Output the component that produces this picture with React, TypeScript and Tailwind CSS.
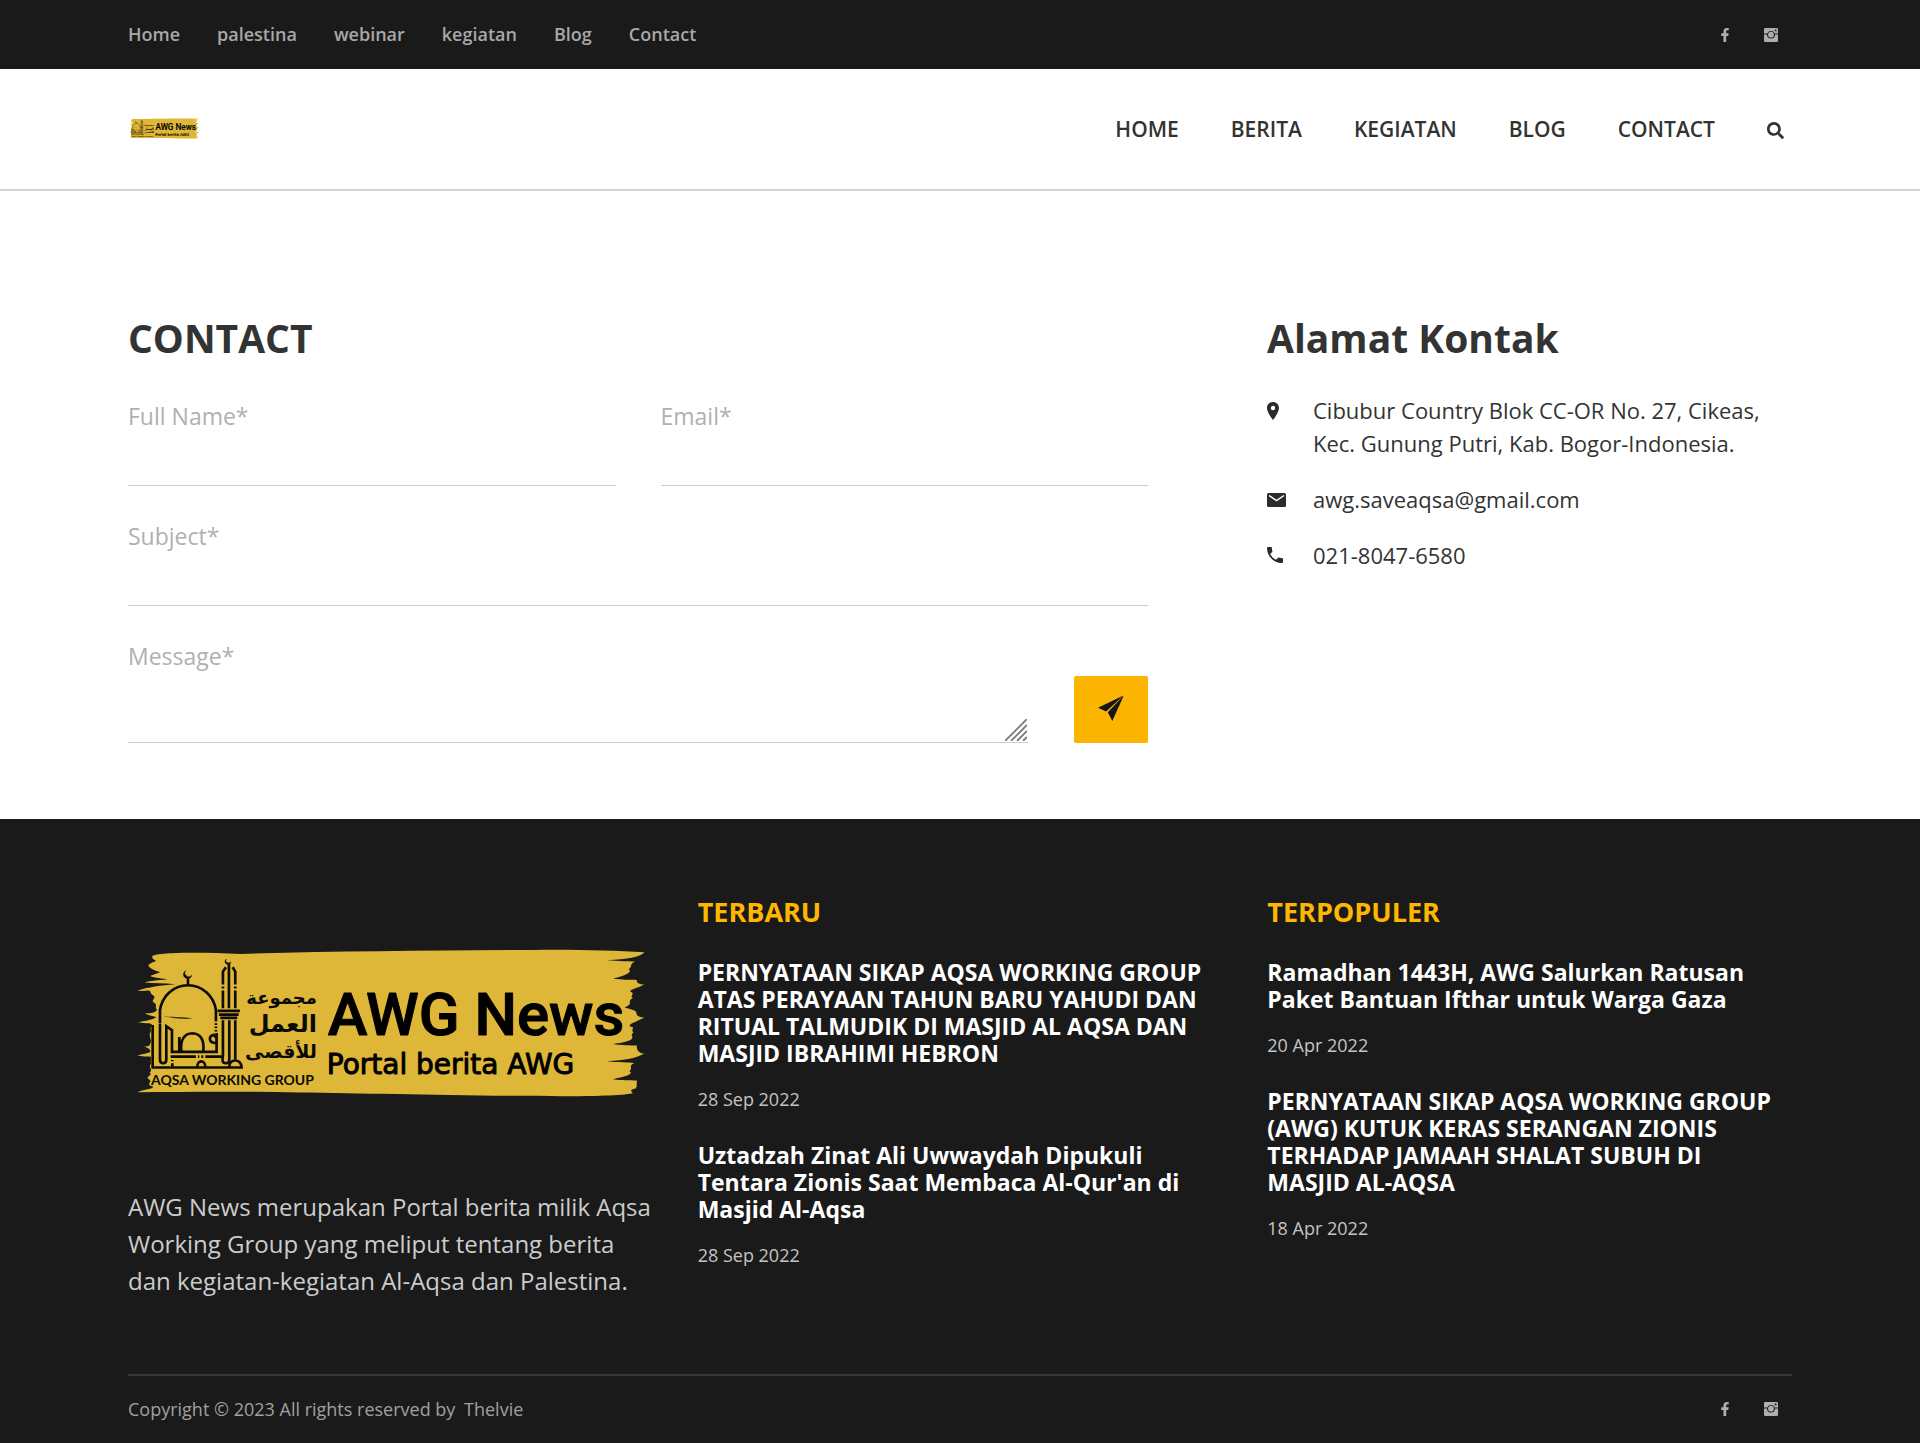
import React from "react";
import { FaFacebookF, FaSearch } from "react-icons/fa";

const topLinks = ["Home", "palestina", "webinar", "kegiatan", "Blog", "Contact"];
const mainLinks = ["HOME", "BERITA", "KEGIATAN", "BLOG", "CONTACT"];

const latest = [
  {
    title:
      "PERNYATAAN SIKAP AQSA WORKING GROUP ATAS PERAYAAN TAHUN BARU YAHUDI DAN RITUAL TALMUDIK DI MASJID AL AQSA DAN MASJID IBRAHIMI HEBRON",
    date: "28 Sep 2022",
  },
  {
    title: "Uztadzah Zinat Ali Uwwaydah Dipukuli Tentara Zionis Saat Membaca Al-Qur'an di Masjid Al-Aqsa",
    date: "28 Sep 2022",
  },
];

const popular = [
  { title: "Ramadhan 1443H, AWG Salurkan Ratusan Paket Bantuan Ifthar untuk Warga Gaza", date: "20 Apr 2022" },
  {
    title: "PERNYATAAN SIKAP AQSA WORKING GROUP (AWG) KUTUK KERAS SERANGAN ZIONIS TERHADAP JAMAAH SHALAT SUBUH DI MASJID AL-AQSA",
    date: "18 Apr 2022",
  },
];

function Logo({ className }: { className: string }) {
  return (
    <svg viewBox="0 0 525 257" className={className} role="img" aria-label="AWG News">
      <g transform="translate(-8 35) scale(.3444 .3333)">
        <path
          fill="#deb738"
          d="M94 78C110 68 220 66 350 72C620 64 900 62 1200 60C1320 58 1430 62 1524 67C1510 82 1475 88 1415 91C1450 94 1475 94 1497 95C1478 104 1490 110 1478 118C1490 126 1470 136 1432 146C1460 150 1480 150 1502 150C1500 158 1505 162 1524 164C1500 176 1486 178 1482 184C1500 192 1478 198 1490 204C1470 216 1495 222 1466 232C1480 238 1495 240 1500 246C1500 256 1506 262 1524 263C1500 276 1476 282 1482 290C1500 292 1482 300 1492 308C1478 318 1500 322 1480 332C1465 338 1450 340 1432 342C1460 346 1480 346 1502 347C1500 358 1506 370 1524 371C1500 384 1470 392 1415 394C1450 398 1480 396 1494 400C1475 408 1492 414 1480 424C1495 432 1470 440 1432 448C1460 452 1480 450 1502 452C1500 462 1504 468 1498 476C1480 480 1484 484 1490 490C1440 500 1300 500 1150 498C900 496 700 490 520 488C350 484 200 486 50 487C70 478 100 476 96 470C70 464 98 456 84 448C70 440 98 436 86 428C98 420 80 412 90 402C88 392 92 384 88 380C76 380 66 380 50 377C66 372 80 370 88 366C88 356 80 354 70 350C84 350 88 346 88 340C94 330 82 320 88 308C94 300 84 296 92 290C96 282 90 282 84 280C74 280 64 280 50 278C70 272 90 272 106 262C94 258 80 256 72 250C84 250 100 250 108 240C98 232 112 226 98 218C88 210 108 204 96 196C86 190 92 186 84 182C72 182 62 184 50 182C80 172 120 166 160 163C130 160 98 160 72 158C80 152 110 152 138 148C110 144 94 142 88 138C100 132 112 130 116 126C96 122 84 112 82 106C90 98 104 96 104 92C96 88 92 84 94 78Z"
        />
        <path fill="#1a1a1a" opacity=".8" d="M124 258C150 262 190 260 212 266C190 269 155 267 124 258Z" />
      </g>
      <g transform="translate(2 50) scale(.3333)" fill="none" stroke="#0d0c06" strokeWidth="8">
        <path d="M90 234V196C96 154 130 121 174 121S252 154 258 196V230M258 235V240M258 245V250M258 255V260" />
        <path d="M174 120V101" />
        <path d="M167 77A13 13 0 1 0 186 90A11 11 0 1 1 167 77Z" fill="#0d0c06" strokeWidth="1" />
        <path d="M289 42A9 9 0 1 0 303 50A8 8 0 1 1 289 42Z" fill="#0d0c06" strokeWidth="1" />
        <path d="M68 240V368H335C335 352 324 346 314 347C304 348 298 356 298 366" />
        <path d="M90 236V344C90 359 109 359 109 344V244L126 256V321H260V264" />
        <path d="M148 276V318M154 320C150 280 166 266 187 265C210 266 224 282 220 320" />
        <path d="M258 294C236 294 234 274 252 270L260 280" />
        <path d="M122 335H198M204 335H208M214 335H220M226 335H278V346C278 358 298 358 298 346V226" />
        <path d="M127 345V349M127 355V365M202 366C202 344 226 344 226 366" />
        <path d="M279 190V137M279 131V125M279 119V80L288 67M297 190V54M316 190V137M316 131V125M316 119V80L308 67" />
        <path d="M279 335V226M316 344V226" />
        <path d="M263 198H330M267 209H326M271 219H322" />
      </g>
      <g fill="#0a0a06" direction="rtl" className="font-bold [font-family:'DejaVu_Sans',sans-serif]">
        <text x="189" y="109" fontSize="18">مجموعة</text>
        <text x="189" y="137" fontSize="24">العمل</text>
        <text x="189" y="163" fontSize="19">للأقصى</text>
      </g>
      <text x="23" y="190" fontSize="14" fill="#0a0a06" className="font-bold [font-family:Lato,sans-serif]">
        AQSA WORKING GROUP
      </text>
      <text x="200" y="140" fontSize="60" fill="#000" stroke="#000" strokeWidth="1" strokeLinejoin="round" className="font-medium [font-family:Roboto,sans-serif]">
        AWG News
      </text>
      <text x="199" y="179" fontSize="28" fill="#000" stroke="#000" strokeWidth="1" strokeLinejoin="round" className="[font-family:'DejaVu_Sans',sans-serif]">
        Portal berita AWG
      </text>
    </svg>
  );
}

function InstagramIcon() {
  return (
    <svg viewBox="0 0 14 14" className="size-3.5" aria-hidden="true">
      <path
        fill="currentColor"
        fillRule="evenodd"
        d="M1.2 0H12.8Q14 0 14 1.2V5.6H10.7A4 4 0 0 0 3.300 5.600H0V1.200Q0 0 1.200 0ZM10.800 1.500V3.300H12.500V1.500ZM0 6.400H3A4 4 0 1 0 11 6.400H14V12.800Q14 14 12.800 14H1.200Q0 14 0 12.800Z"
      />
      <circle cx="7" cy="6.700" r="2.900" fill="currentColor" />
    </svg>
  );
}

function Social() {
  return (
    <div className="flex items-center gap-8 pr-3.5 text-[#aeaeae]">
      <a href="#facebook" aria-label="Facebook">
        <FaFacebookF className="size-3.5" />
      </a>
      <a href="#instagram" aria-label="Instagram">
        <InstagramIcon />
      </a>
    </div>
  );
}

function Field({ id, label, type = "text" }: { id: string; label: string; type?: string }) {
  return (
    <div className="flex flex-col">
      <label htmlFor={id} className="text-[23px] leading-9 text-[#b0b0b0]">
        {label}
      </label>
      <input id={id} type={type} className="h-[52px] w-full border-b border-[#ccc] bg-transparent text-[23px] outline-none" />
    </div>
  );
}

function PostList({ heading, posts }: { heading: string; posts: { title: string; date: string }[] }) {
  return (
    <section>
      <h3 className="text-[27px] leading-[34px] font-bold text-[#ffb600]">{heading}</h3>
      <ul className="mt-[30px] flex flex-col gap-[29px] pr-3.5">
        {posts.map((p) => (
          <li key={p.title}>
            <a href="#post" className="block text-[23px] leading-[27px] font-bold text-white">
              {p.title}
            </a>
            <time className="mt-[18px] block text-lg leading-7 text-[#c4c4c4]">{p.date}</time>
          </li>
        ))}
      </ul>
    </section>
  );
}

export default function App() {
  return (
    <div className="bg-white text-[#333] [font-family:'Open_Sans','Noto_Sans',sans-serif]">
      <div className="flex h-[69px] items-center justify-between bg-[#1a1a1a] px-32">
        <nav aria-label="Top" className="flex gap-[37px] pb-0.5 text-lg font-semibold text-[#a8a8a8]">
          {topLinks.map((l) => (
            <a key={l} href="#top">
              {l}
            </a>
          ))}
        </nav>
        <Social />
      </div>

      <header className="flex h-[122px] items-center justify-between border-b-2 border-[#d3d3d3] px-32">
        <a href="#home">
          <Logo className="w-[72px]" />
        </a>
        <div className="flex items-center gap-[52px] pt-0.5 pr-2">
          <nav aria-label="Main" className="flex gap-[52px] text-[21px] font-semibold">
            {mainLinks.map((l) => (
              <a key={l} href="#main">
                {l}
              </a>
            ))}
          </nav>
          <button type="button" aria-label="Search">
            <FaSearch className="size-[17px]" />
          </button>
        </div>
      </header>

      <main className="grid grid-cols-[1020fr_525fr] gap-x-[119px] px-32 pt-[123px] pb-[76px]">
        <form>
          <h1 className="text-[39px] leading-[48px] font-bold">CONTACT</h1>
          <div className="mt-9 grid grid-cols-2 gap-x-[45px] gap-y-8">
            <Field id="name" label="Full Name*" />
            <Field id="email" label="Email*" type="email" />
            <div className="col-span-2">
              <Field id="subject" label="Subject*" />
            </div>
            <div className="col-span-2 flex items-end gap-[46px]">
              <div className="relative flex flex-1 flex-col">
                <label htmlFor="message" className="text-[23px] leading-9 text-[#b0b0b0]">
                  Message*
                </label>
                <textarea id="message" className="block h-[69px] w-full resize-none border-b border-[#ccc] bg-transparent text-[23px] outline-none" />
                <svg viewBox="0 0 22 22" className="pointer-events-none absolute right-px bottom-0.5 size-[22px]" aria-hidden="true">
                  <path d="M0 22L22 0M6 22L22 6M12 22L22 12M18 22L22 18" stroke="#7b7b7b" strokeWidth="1.800" fill="none" />
                </svg>
              </div>
              <button type="submit" aria-label="Send" className="flex h-[67px] w-[74px] items-center justify-center rounded-xs bg-[#fbb500] pb-1">
                <svg viewBox="0 0 26 26" className="size-[26px]" aria-hidden="true">
                  <path fill="#151515" d="M25.500 .5L0 12.800L8.200 16.400ZM25.800 .5L9.800 17.200L14.300 26Z" />
                </svg>
              </button>
            </div>
          </div>
        </form>

        <section>
          <h2 className="text-[39px] leading-[48px] font-bold">Alamat Kontak</h2>
          <ul className="mt-8 flex flex-col gap-[23px] text-[22px] leading-[33px]">
            <li className="flex">
              <svg viewBox="0 0 12 18" className="mt-2 mr-[34px] h-[18px] w-3 shrink-0" aria-hidden="true">
                <path fill="#2b2b2b" fillRule="evenodd" d="M6 0C2.700 0 0 2.600 0 6C0 10.500 6 18 6 18S12 10.500 12 6C12 2.600 9.300 0 6 0ZM6 3.800A2.200 2.200 0 1 1 6 8.200A2.200 2.200 0 1 1 6 3.800Z" />
              </svg>
              <span className="max-w-[470px]">Cibubur Country Blok CC-OR No. 27, Cikeas, Kec. Gunung Putri, Kab. Bogor-Indonesia.</span>
            </li>
            <li className="flex">
              <svg viewBox="0 0 19 14" className="mt-2.5 mr-[27px] h-3.5 w-[19px] shrink-0" aria-hidden="true">
                <rect width="19" height="14" rx="1.500" fill="#2b2b2b" />
                <path d="M2 2.500L9.500 7.500L17 2.500" fill="none" stroke="#fff" strokeWidth="1.500" />
              </svg>
              <a href="mailto:awg.saveaqsa@gmail.com">awg.saveaqsa@gmail.com</a>
            </li>
            <li className="flex">
              <svg viewBox="3 3 18 18" className="mt-2 mr-[30px] size-4 shrink-0" aria-hidden="true">
                <path fill="#2b2b2b" d="M6.620 10.790c1.440 2.830 3.760 5.140 6.590 6.590l2.200-2.200c.27-.27.67-.36 1.020-.24 1.120.37 2.330.57 3.570.57.550 0 1 .450 1 1V20c0 .55-.45 1-1 1-9.390 0-17-7.610-17-17 0-.55.450-1 1-1h3.500c.55 0 1 .450 1 1 0 1.250.2 2.450.57 3.570.11.350.03.740-.25 1.020l-2.200 2.200z" />
              </svg>
              <a href="tel:02180476580">021-8047-6580</a>
            </li>
          </ul>
        </section>
      </main>

      <footer className="bg-[#1a1a1a] px-32 pt-[76px]">
        <div className="grid grid-cols-3 gap-x-[45px] pb-[74px]">
          <section>
            <Logo className="w-full" />
            <p className="mt-9 pb-px text-2xl leading-[37px] text-[#ccc]">
              AWG News merupakan Portal berita milik Aqsa Working Group yang meliput tentang berita dan kegiatan-kegiatan Al-Aqsa dan Palestina.
            </p>
          </section>
          <PostList heading="TERBARU" posts={latest} />
          <PostList heading="TERPOPULER" posts={popular} />
        </div>
        <div className="flex h-[69px] items-center justify-between border-t-2 border-[#383838]">
          <p className="text-lg text-[#a0a0a0]">
            Copyright © 2023 All rights reserved by{" "}
            <a href="#thelvie" className="ml-1">
              Thelvie
            </a>
          </p>
          <Social />
        </div>
      </footer>
    </div>
  );
}
